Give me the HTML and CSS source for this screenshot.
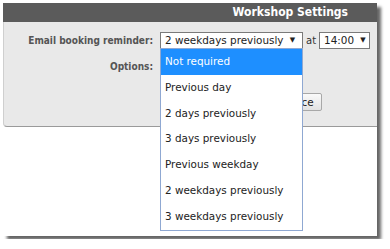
FILE: index.html
```html
<!DOCTYPE html>
<html lang="en">
<head>
    <meta charset="UTF-8">
    <meta name="viewport" content="width=device-width, initial-scale=1.0">
    <title>Workshop Settings</title>
    <link rel="stylesheet" href="styles.css">
</head>
<body>
    <div class="window">
        <div class="titlebar">Workshop Settings</div>
        <div class="panel">
            <div class="form">
                <label class="label">Email booking reminder:</label>
                <div class="field">
                    <div class="select-wrap">
                        <div class="select wide">2 weekdays previously <span class="arrow">&#9660;</span></div>
                        <ul class="dropdown">
                            <li class="selected">Not required</li>
                            <li>Previous day</li>
                            <li>2 days previously</li>
                            <li>3 days previously</li>
                            <li>Previous weekday</li>
                            <li>2 weekdays previously</li>
                            <li>3 weekdays previously</li>
                        </ul>
                    </div>
                    <span class="at">at</span>
                    <div class="select time">14:00 <span class="arrow">&#9660;</span></div>
                </div>
                <label class="label opt-label">Options:</label>
                <div class="field options"></div>
                <div></div>
                <div class="field actions">
                    <button class="btn">Replace</button>
                </div>
            </div>
        </div>
    </div>
</body>
</html>
```

FILE: styles.css
```css
body {
    margin: 0;
    background: #fff;
    font-family: "DejaVu Sans", Verdana, sans-serif;
}
.window {
    margin: 3px;
    width: 374px;
    height: 233px;
    background: #fff;
    box-shadow: 4px 4px 3px rgba(0, 0, 0, 0.6);
}
.titlebar {
    height: 19px;
    background: #5b5b5b;
    color: #fff;
    font-family: "DejaVu Sans Condensed", "DejaVu Sans", sans-serif;
    font-weight: bold;
    font-size: 12px;
    line-height: 19px;
    text-align: right;
    padding-right: 29px;
}
.panel {
    height: 105px;
    background: #e9e9e9;
    border-left: 1px solid #cfcfcf;
    border-bottom: 1px solid #9a9a9a;
    border-bottom-left-radius: 4px;
    box-sizing: border-box;
}
.form {
    display: grid;
    grid-template-columns: 149px auto;
    column-gap: 7px;
    padding-top: 10px;
}
.label {
    text-align: right;
    font-family: "DejaVu Sans Condensed", "DejaVu Sans", sans-serif;
    font-size: 10px;
    font-weight: bold;
    color: #555;
    line-height: 17px;
}
.opt-label {
    margin-top: 9px;
}
.field {
    display: flex;
    align-items: center;
    height: 17px;
}
.options {
    height: 25px;
    margin-top: 7px;
}
.select-wrap {
    position: relative;
}
.select {
    box-sizing: border-box;
    height: 17px;
    border: 1px solid #7a7a7a;
    background: #fff;
    font-size: 10.4px;
    line-height: 15px;
    color: #222;
    padding: 0 4px;
    white-space: nowrap;
}
.wide {
    width: 143px;
}
.time {
    width: 51px;
}
.arrow {
    font-size: 7px;
    vertical-align: 2px;
    margin-left: 3px;
}
.at {
    font-size: 10px;
    color: #333;
    margin: 0 3px;
}
.dropdown {
    position: absolute;
    top: 16px;
    left: 0;
    width: 143px;
    box-sizing: border-box;
    margin: 0;
    padding: 0;
    list-style: none;
    background: #fff;
    border: 1px solid #8fa8d2;
    z-index: 2;
}
.dropdown li {
    height: 25.8px;
    line-height: 25.8px;
    font-size: 10.4px;
    color: #222;
    padding-left: 4px;
}
.dropdown .selected {
    background: #1e8fff;
    color: #fff;
}
.actions {
    height: 18px;
    margin-top: 12px;
}
.btn {
    margin-left: 104px;
    width: 58px;
    height: 18px;
    font-family: "DejaVu Sans", Verdana, sans-serif;
    font-size: 10.4px;
    color: #222;
    border: 1px solid #a8a8a8;
    border-radius: 2px;
    background: linear-gradient(#fafafa, #e2e2e2);
    padding: 0;
}
```
